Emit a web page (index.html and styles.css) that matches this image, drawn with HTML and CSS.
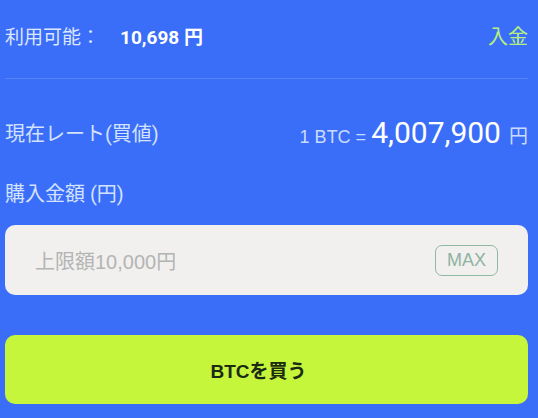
FILE: index.html
```html
<!DOCTYPE html>
<html lang="ja">
<head>
<meta charset="utf-8">
<link rel="stylesheet" href="styles.css">
</head>
<body>
<div class="page">
  <div class="balance-row">
    <div class="balance">
      <span class="balance-label">利用可能：</span>
      <span class="balance-value">10,698 円</span>
    </div>
    <a class="deposit">入金</a>
  </div>
  <div class="rate-row">
    <span class="rate-label">現在レート(買値)</span>
    <span class="rate">
      <span class="rate-unit">1 BTC =</span>
      <span class="rate-value">4,007,900</span>
      <span class="rate-yen">円</span>
    </span>
  </div>
  <div class="amount-label">購入金額 (円)</div>
  <div class="amount-input">
    <span class="placeholder">上限額10,000円</span>
    <button class="max-btn">MAX</button>
  </div>
  <button class="buy-btn">BTCを買う</button>
</div>
</body>
</html>
```
FILE: styles.css
```css
html, body {
  margin: 0;
  padding: 0;
  background: #3b6ef8;
  font-family: Roboto, "Noto Sans CJK JP", sans-serif;
}
.page {
  padding: 0 10px 0 5px;
  display: flex;
  flex-direction: column;
}
.balance-row {
  display: flex;
  align-items: center;
  justify-content: space-between;
  height: 70px;
  padding-bottom: 8px;
  border-bottom: 1px solid #5683f6;
}
.balance {
  display: flex;
  align-items: center;
}
.balance-label {
  color: #dbe6ff;
  font-size: 19px;
  width: 115px;
}
.balance-value {
  color: #ffffff;
  font-size: 19px;
  font-weight: 700;
}
.deposit {
  color: #b8f07e;
  font-size: 20px;
  font-family: "Noto Sans CJK JP", sans-serif;
}
.rate-row {
  display: flex;
  align-items: center;
  justify-content: space-between;
  height: 34px;
  margin-top: 36px;
}
.rate-label {
  color: #d3e2ff;
  font-size: 20px;
}
.rate {
  display: flex;
  align-items: baseline;
  gap: 5px;
}
.rate-unit {
  color: #c9dcff;
  font-size: 18px;
  font-family: "Liberation Sans", sans-serif;
}
.rate-value {
  color: #ffffff;
  font-size: 30px;
}
.rate-yen {
  color: #c9dcff;
  font-size: 19px;
  margin-left: 3px;
}
.amount-label {
  color: #d3e2ff;
  font-size: 20px;
  line-height: 24px;
  margin-top: 33px;
}
.amount-input {
  margin-top: 19px;
  height: 70px;
  background: #f1f0ee;
  border-radius: 10px;
  display: flex;
  align-items: center;
  justify-content: space-between;
  padding: 0 30px 0 30px;
}
.placeholder {
  color: #b4b4b4;
  font-size: 20px;
  font-family: "Liberation Sans", "Noto Sans CJK JP", sans-serif;
}
.max-btn {
  width: 63px;
  height: 31px;
  border: 1px solid #8fb8a3;
  border-radius: 7px;
  background: transparent;
  color: #8fb3a2;
  font-family: "Liberation Sans", sans-serif;
  font-size: 18px;
  padding: 0;
}
.buy-btn {
  margin-top: 40px;
  height: 69px;
  border: none;
  border-radius: 10px;
  background: #c6f63b;
  color: #1b2a12;
  font-family: "Liberation Sans", "Noto Sans CJK JP", sans-serif;
  font-size: 19px;
  font-weight: 700;
  padding: 0 16px 0 0;
}
```
